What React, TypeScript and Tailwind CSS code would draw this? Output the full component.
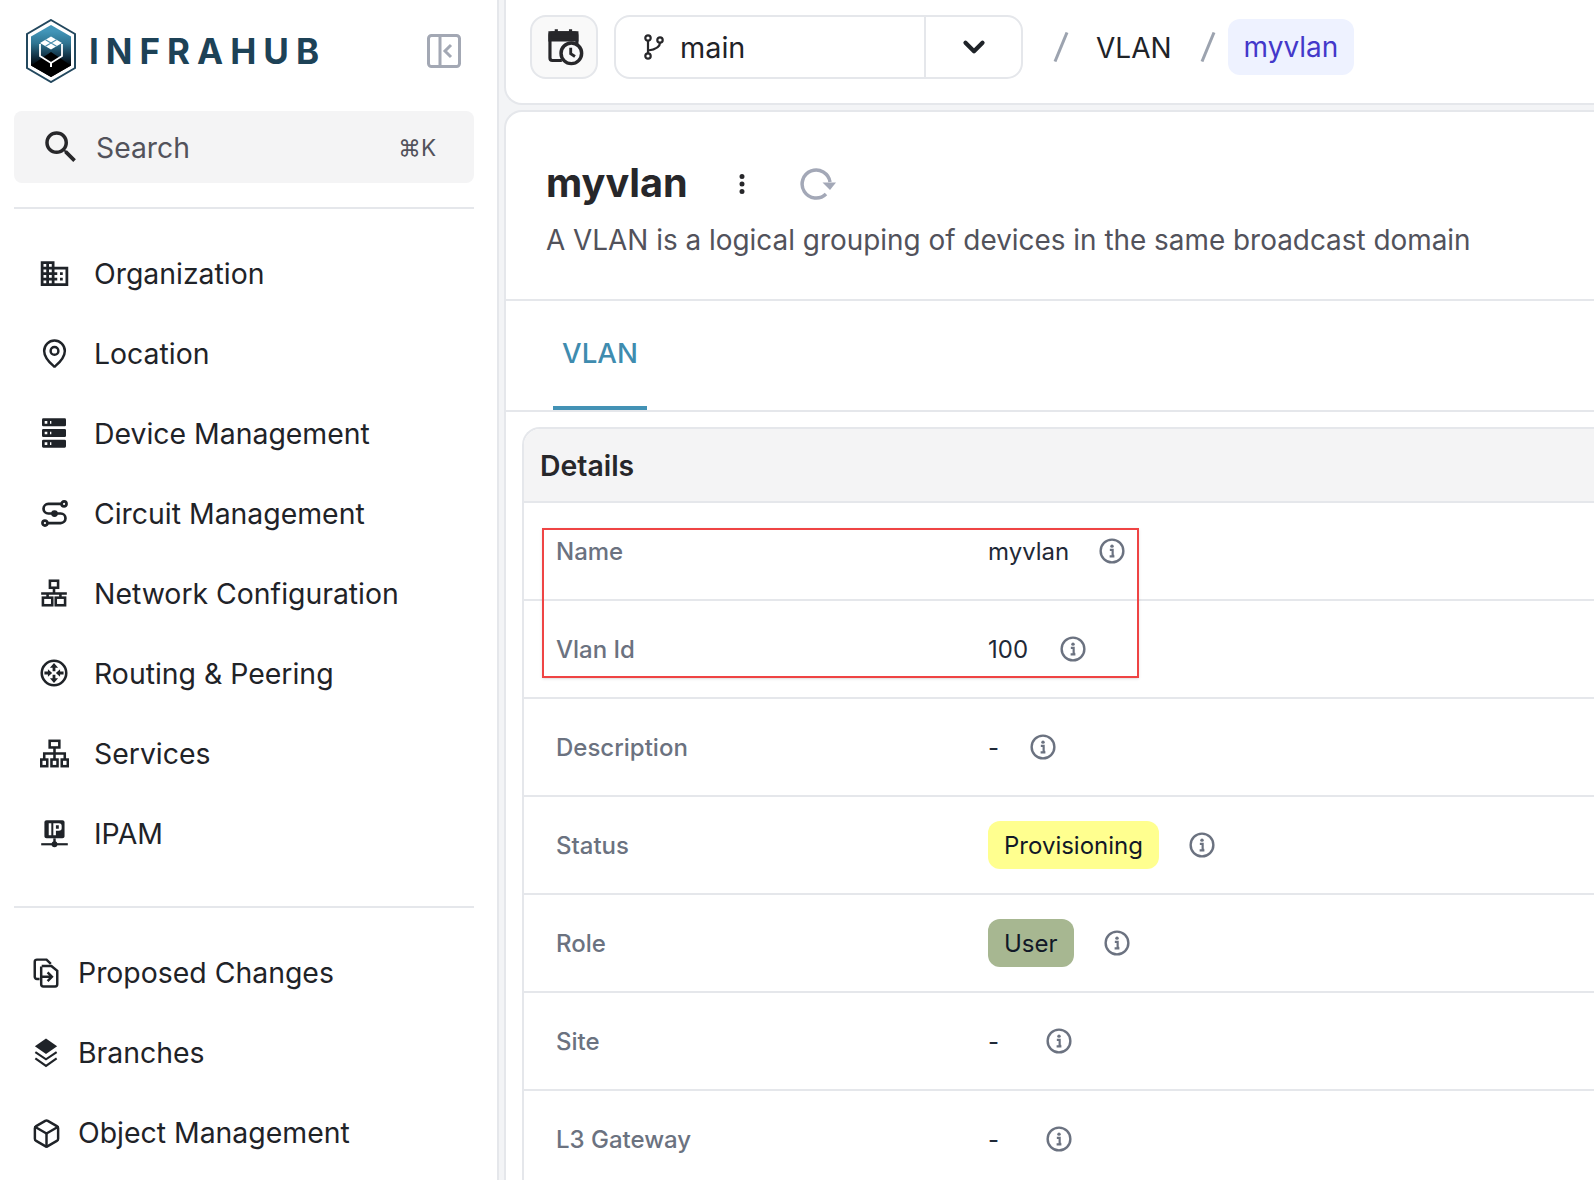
import type { ReactNode } from "react";
import { Box, ChevronDown, MapPin } from "lucide-react";

const font = "font-['Inter','Liberation_Sans',sans-serif]";

function MdiIcon({ d, className }: { d: string; className?: string }) {
  return (
    <svg viewBox="0 0 24 24" fill="currentColor" className={className}>
      <path d={d} />
    </svg>
  );
}

function Logo() {
  return (
    <svg viewBox="0 0 50 64" className="h-[64px] w-[50px] shrink-0">
      <defs>
        <linearGradient id="hexFill" x1="0" y1="0" x2="0" y2="1">
          <stop offset="0.12" stopColor="#4295b8" />
          <stop offset="0.35" stopColor="#2f7592" />
          <stop offset="0.62" stopColor="#0f2c3e" />
          <stop offset="0.8" stopColor="#000000" />
        </linearGradient>
      </defs>
      <path d="M25 1 L49 15 V49 L25 63 L1 49 V15 Z" fill="#fff" stroke="#23485e" strokeWidth="2" />
      <path d="M25 6 L45 17.5 V46.5 L25 58 L5 46.5 V17.5 Z" fill="url(#hexFill)" />
      <path d="M5 46.5 L25 33 L45 46.5 L25 58 Z" fill="#000" />
      <path d="M14 25 V37 L25 44 L36 37 V25" fill="none" stroke="#fff" strokeWidth="1.8" />
      <path d="M25 44 V48" stroke="#fff" strokeWidth="2" />
      <path d="M25 17.5 L36 24 L25 30.5 L14 24 Z" fill="#fff" />
      <path d="M19.5 20.8 L30.5 27.3 M30.5 20.8 L19.5 27.3" stroke="#4a8fae" strokeWidth="1.1" />
    </svg>
  );
}

function CircuitIcon({ className }: { className?: string }) {
  return (
    <svg viewBox="0 0 24 24" fill="none" stroke="currentColor" strokeWidth="2.4" className={className}>
      <circle cx="20.5" cy="3.5" r="2.2" />
      <circle cx="3.5" cy="20.5" r="2.2" />
      <path d="M18.3 3.5H6.5a4.25 4.25 0 0 0 0 8.5h11a4.25 4.25 0 0 1 0 8.5H5.7" />
      <circle cx="12" cy="12" r="3" fill="currentColor" stroke="none" />
    </svg>
  );
}

function NetworkIcon({ className }: { className?: string }) {
  return (
    <svg viewBox="0 0 24 24" fill="none" stroke="currentColor" strokeWidth="2.2" className={className}>
      <rect x="8.5" y="1.5" width="7" height="6" />
      <path d="M12 7.5V12.5M1 12.5H23M6.5 12.5V16M17.500 12.500V16" />
      <rect x="2.500" y="16" width="8" height="6.500" />
      <rect x="13.500" y="16" width="8" height="6.500" />
    </svg>
  );
}

function RoutingIcon({ className }: { className?: string }) {
  return (
    <svg viewBox="0 0 24 24" fill="none" stroke="currentColor" className={className}>
      <circle cx="12" cy="12" r="10.500" strokeWidth="2.200" />
      <path d="M12 3.500L15.500 7.600H13.200V10.500H10.800V7.600H8.500Z" fill="currentColor" stroke="none" />
      <path d="M12 20.500L15.500 16.400H13.200V13.500H10.800V16.400H8.500Z" fill="currentColor" stroke="none" />
      <path d="M10.400 12L6.800 8.700V10.800H3.800V13.200H6.800V15.300Z" fill="currentColor" stroke="none" />
      <path d="M13.600 12L17.200 8.700V10.800H20.200V13.200H17.200V15.300Z" fill="currentColor" stroke="none" />
    </svg>
  );
}

function SitemapIcon({ className }: { className?: string }) {
  return (
    <svg viewBox="0 0 24 24" fill="none" stroke="currentColor" strokeWidth="2.100" className={className}>
      <rect x="8" y="1.500" width="8" height="5.500" />
      <path d="M12 7V12M3.500 17V12H20.500V17M12 12V17" />
      <rect x="1" y="17" width="5" height="5.500" />
      <rect x="9.500" y="17" width="5" height="5.500" />
      <rect x="18" y="17" width="5" height="5.500" />
    </svg>
  );
}

function IpamIcon({ className }: { className?: string }) {
  return (
    <svg viewBox="0 0 24 24" className={className}>
      <path
        fill="currentColor"
        fillRule="evenodd"
        transform="translate(-2.300 0) scale(1.190 1)"
        d="M6.500 1H17.500A1.500 1.500 0 0 1 19 2.500V14.500A1.500 1.500 0 0 1 17.500 16H6.500A1.500 1.500 0 0 1 5 14.500V2.500A1.500 1.500 0 0 1 6.500 1ZM8 3.500V13.500H9.800V3.500ZM11.200 3.500V13.500H13V9.800H15A2.200 2.200 0 0 0 17 7.500V5.800A2.200 2.200 0 0 0 15 3.500ZM13 5.200H15V8.100H13Z"
      />
      <rect x="1" y="20" width="22" height="1.800" fill="currentColor" />
      <rect x="11" y="16" width="2" height="4" fill="currentColor" />
      <circle cx="12" cy="20.900" r="2.400" fill="currentColor" />
    </svg>
  );
}

function ChangesIcon({ className }: { className?: string }) {
  return (
    <svg viewBox="0 0 24 28" fill="none" stroke="currentColor" strokeWidth="2.300" className={className}>
      <path d="M6 19.500H3.500A2 2 0 0 1 1.500 17.500V3.500A2 2 0 0 1 3.500 1.500H12.500L16.500 5.500" />
      <path d="M7.500 8V24.500A2 2 0 0 0 9.500 26.500H20.500A2 2 0 0 0 22.500 24.500V12L17 7.500H8" />
      <path d="M7.500 17.500H17M13.500 13.500L17.500 17.500L13.500 21.500" />
    </svg>
  );
}

function LayersIcon({ className }: { className?: string }) {
  return (
    <svg viewBox="0 0 24 32" className={className}>
      <path d="M12 0.500L23.500 8.500L12 16.500L0.500 8.500Z" fill="currentColor" />
      <path d="M1 14.500L12 22L23 14.500M1 21L12 28.800L23 21" fill="none" stroke="currentColor" strokeWidth="2.200" />
    </svg>
  );
}

function CalendarClockIcon({ className }: { className?: string }) {
  return (
    <svg viewBox="0 0 24 24" fill="none" stroke="currentColor" strokeWidth="2" className={className}>
      <path d="M10 20.500H4A1.500 1.500 0 0 1 2.500 19V4.500A1.500 1.500 0 0 1 4 3H18A1.500 1.500 0 0 1 19.500 4.500V11" />
      <path d="M2.500 3H19.500V7.500H2.500Z" fill="currentColor" />
      <path d="M6.500 0.800V3M15.500 0.800V3" strokeWidth="2" />
      <circle cx="16" cy="16" r="6.500" fill="#f9f9f9" strokeWidth="2.200" />
      <path d="M15.600 12.500V16.200L18.300 18" strokeWidth="1.800" />
    </svg>
  );
}

function BranchIcon({ className }: { className?: string }) {
  return (
    <svg viewBox="0 0 22 26" fill="none" stroke="#27272a" strokeWidth="2.200" className={className}>
      <circle cx="5" cy="4" r="2.700" />
      <circle cx="5" cy="22" r="2.700" />
      <circle cx="17" cy="6" r="2.700" />
      <path d="M5 6.700V19.300M17 8.700C17 13 12 15.500 5 16.500" />
    </svg>
  );
}

function InfoIcon() {
  return (
    <svg viewBox="0 0 24 24" fill="none" className="h-[26px] w-[26px] shrink-0 text-[#6b7280]">
      <circle cx="12" cy="12" r="10.500" stroke="currentColor" strokeWidth="2.200" />
      <circle cx="12" cy="7.500" r="1.600" fill="currentColor" />
      <path d="M10 11H12.600V16.500H14M9.800 17H14.200" stroke="currentColor" strokeWidth="2" />
    </svg>
  );
}

function Slash() {
  return (
    <svg viewBox="0 0 16 30" className="h-[30px] w-[16px] shrink-0" stroke="#9ca3af" strokeWidth="3">
      <path d="M14 0.500L2 29.500" />
    </svg>
  );
}

const mainNav: { label: string; icon: ReactNode }[] = [
  {
    label: "Organization",
    icon: (
      <MdiIcon
        className="h-[33px] w-[33px]"
        d="M18,15H16V17H18M18,11H16V13H18M20,19H12V17H14V15H12V13H14V11H12V9H20M10,7H8V5H10M10,11H8V9H10M10,15H8V13H10M10,19H8V17H10M6,7H4V5H6M6,11H4V9H6M6,15H4V13H6M6,19H4V17H6M12,7V3H2V21H22V7H12Z"
      />
    ),
  },
  { label: "Location", icon: <MapPin className="h-[31px] w-[31px]" strokeWidth={1.9} /> },
  {
    label: "Device Management",
    icon: (
      <MdiIcon
        className="h-[32px] w-[32px]"
        d="M4,1H20A1,1 0 0,1 21,2V6A1,1 0 0,1 20,7H4A1,1 0 0,1 3,6V2A1,1 0 0,1 4,1M4,9H20A1,1 0 0,1 21,10V14A1,1 0 0,1 20,15H4A1,1 0 0,1 3,14V10A1,1 0 0,1 4,9M4,17H20A1,1 0 0,1 21,18V22A1,1 0 0,1 20,23H4A1,1 0 0,1 3,22V18A1,1 0 0,1 4,17M9,5H10V3H9V5M9,13H10V11H9V13M9,21H10V19H9V21M5,3V5H7V3H5M5,11V13H7V11H5M5,19V21H7V19H5Z"
      />
    ),
  },
  { label: "Circuit Management", icon: <CircuitIcon className="h-[27px] w-[27px]" /> },
  { label: "Network Configuration", icon: <NetworkIcon className="h-[28px] w-[28px]" /> },
  { label: "Routing & Peering", icon: <RoutingIcon className="h-[28px] w-[28px]" /> },
  { label: "Services", icon: <SitemapIcon className="h-[29px] w-[29px]" /> },
  { label: "IPAM", icon: <IpamIcon className="h-[29px] w-[29px]" /> },
];

const bottomNav: { label: string; icon: ReactNode }[] = [
  { label: "Proposed Changes", icon: <ChangesIcon className="h-[30px] w-[26px]" /> },
  { label: "Branches", icon: <LayersIcon className="h-[31px] w-[24px]" /> },
  { label: "Object Management", icon: <Box className="h-[31px] w-[31px]" strokeWidth={1.9} /> },
];

function NavRow({ label, icon, className, textClass }: { label: string; icon: ReactNode; className: string; textClass: string }) {
  return (
    <div className={`flex h-[80px] items-center text-[28.4px] text-[#1f2328] ${className}`}>
      <span className="flex w-[28px] items-center justify-center [&>svg]:shrink-0">{icon}</span>
      <span className={textClass}>{label}</span>
    </div>
  );
}

function Sidebar() {
  return (
    <aside className="flex h-full w-[499px] shrink-0 flex-col border-r-2 border-[#e5e7eb] bg-white pl-[14px] pr-[23px]">
      <div className="flex h-[111px] shrink-0 items-center justify-between pb-[10px] pl-[12px] pr-[13px]">
        <div className="flex items-center gap-[13px]">
          <Logo />
          <span className="mt-[2px] text-[35px] font-bold leading-none tracking-[0.2em] text-[#1d4257]">INFRAHUB</span>
        </div>
        <svg viewBox="0 0 34 34" fill="none" stroke="#a3a8b4" strokeWidth="3" className="h-[34px] w-[34px]">
          <rect x="1.500" y="1.500" width="31" height="31" rx="3" />
          <path d="M13 2V32M24 11L18 17L24 23" />
        </svg>
      </div>

      <div className="flex h-[72px] shrink-0 items-center rounded-lg bg-[#f4f4f5] pl-[26px] pr-[38px]">
        <MdiIcon
          className="h-[42px] w-[42px] shrink-0 text-[#27272a]"
          d="M9.500,3A6.500,6.500 0 0,1 16,9.500C16,11.110 15.410,12.590 14.440,13.730L14.710,14H15.500L20.500,19L19,20.500L14,15.500V14.710L13.730,14.440C12.590,15.410 11.110,16 9.500,16A6.500,6.500 0 0,1 3,9.500A6.500,6.500 0 0,1 9.500,3M9.500,5C7,5 5,7 5,9.500C5,12 7,14 9.500,14C12,14 14,12 14,9.500C14,7 12,5 9.500,5Z"
        />
        <span className="mt-[2px] ml-[14px] flex-1 text-[28.3px] text-[#52525b]">Search</span>
        <span className="mt-[1px] text-[22.5px] text-[#52525b]">⌘K</span>
      </div>

      <div className="mt-[24px] border-t-2 border-[#e5e7eb]" />

      <nav className="mt-[24px] flex flex-col">
        {mainNav.map((item) => (
          <NavRow key={item.label} label={item.label} icon={item.icon} className="pl-[26px]" textClass="ml-[26px] mt-[2px]" />
        ))}
      </nav>

      <div className="mt-[33px] border-t-2 border-[#e5e7eb]" />

      <nav className="mt-[25px] flex flex-col">
        {bottomNav.map((item) => (
          <NavRow key={item.label} label={item.label} icon={item.icon} className="pl-[18px]" textClass="ml-[18px]" />
        ))}
      </nav>
    </aside>
  );
}

function TopBar() {
  return (
    <header className="flex h-[105px] shrink-0 items-start rounded-bl-[18px] border-b-2 border-l-2 border-[#e5e7eb] bg-white pl-[24px] pt-[15px]">
      <button className="flex h-[64px] w-[68px] items-center justify-center rounded-[16px] border-2 border-[#e5e7eb] bg-[#f9f9f9]">
        <CalendarClockIcon className="ml-[2px] h-[38px] w-[38px] text-[#27272a]" />
      </button>

      <div className="ml-[16px] flex h-[64px] w-[409px] items-center rounded-[16px] border-2 border-[#e5e7eb] bg-white text-[28.8px] text-[#1f2328]">
        <div className="flex h-full flex-1 items-center border-r-2 border-[#e5e7eb] pl-[27px]">
          <BranchIcon className="h-[26px] w-[22px] shrink-0" />
          <span className="ml-[15px] mt-[1px]">main</span>
        </div>
        <div className="flex w-[95px] items-center justify-center">
          <ChevronDown className="h-[34px] w-[34px]" strokeWidth={3} />
        </div>
      </div>

      <div className="flex h-[64px] items-center text-[28px]">
        <span className="ml-[30px]">
          <Slash />
        </span>
        <span className="ml-[27px] mt-[1px] text-[#1f2328]">VLAN</span>
        <span className="ml-[28px]">
          <Slash />
        </span>
        <span className="ml-[12px] flex h-[56px] items-center rounded-[12px] bg-[#eef2ff] px-[16px] text-[#4338ca]">
          myvlan
        </span>
      </div>
    </header>
  );
}

type Row = {
  label: string;
  value: string;
  badge?: string;
  iconGap: string;
};

const rows: Row[] = [
  { label: "Name", value: "myvlan", iconGap: "ml-[30px]" },
  { label: "Vlan Id", value: "100", iconGap: "ml-[32px]" },
  { label: "Description", value: "-", iconGap: "ml-[31px]" },
  { label: "Status", badge: "bg-[#ffff8f]", value: "Provisioning", iconGap: "ml-[30px]" },
  { label: "Role", badge: "bg-[#a7b791]", value: "User", iconGap: "ml-[30px]" },
  { label: "Site", value: "-", iconGap: "ml-[47px]" },
  { label: "L3 Gateway", value: "-", iconGap: "ml-[47px]" },
];

function DetailRow({ row }: { row: Row }) {
  return (
    <div className="flex h-[98px] shrink-0 items-center border-b-2 border-[#e5e7eb] pl-[32px] text-[24px]">
      <span className="mt-[2px] w-[432px] font-medium text-[#6b7280]">{row.label}</span>
      {row.badge ? (
        <span className={`flex h-[48px] items-center rounded-[12px] px-[16px] pt-[2px] text-[#111827] ${row.badge}`}>
          {row.value}
        </span>
      ) : (
        <span className="mt-[2px] text-[#1f2937]">{row.value}</span>
      )}
      <span className={row.iconGap}>
        <InfoIcon />
      </span>
    </div>
  );
}

function ObjectCard() {
  return (
    <section className="min-h-0 flex-1 overflow-hidden rounded-tl-[18px] border-l-2 border-t-2 border-[#e5e7eb] bg-white">
      <div className="h-[189px] border-b-2 border-[#e5e7eb] pl-[40px] pt-[47px]">
        <div className="flex h-[50px] items-center">
          <h1 className="text-[39.700px] font-bold leading-none text-[#27272a]">myvlan</h1>
          <MdiIcon
            className="ml-[39px] h-[30px] w-[30px] text-[#27272a]"
            d="M12,16A2,2 0 0,1 14,18A2,2 0 0,1 12,20A2,2 0 0,1 10,18A2,2 0 0,1 12,16M12,10A2,2 0 0,1 14,12A2,2 0 0,1 12,14A2,2 0 0,1 10,12A2,2 0 0,1 12,10M12,4A2,2 0 0,1 14,6A2,2 0 0,1 12,8A2,2 0 0,1 10,6A2,2 0 0,1 12,4Z"
          />
          <svg viewBox="0 0 36 36" className="ml-[43px] h-[36px] w-[36px]">
            <path d="M30 16A14 14 0 1 0 26 28" fill="none" stroke="#a3a8b7" strokeWidth="3.500" />
            <path d="M22.500 16.500H36L30 24Z" fill="#a3a8b7" />
          </svg>
        </div>
        <p className="mt-[11px] text-[27.9px] text-[#52525b]">
          A VLAN is a logical grouping of devices in the same broadcast domain
        </p>
      </div>

      <div className="flex h-[111px] border-b-2 border-[#e5e7eb] pl-[47px]">
        <div className="flex h-[109px] items-center border-b-4 border-[#4392b5] px-[9px] text-[27.700px] font-medium text-[#3f8caf]">
          VLAN
        </div>
      </div>

      <div className="relative ml-[16px] mt-[15px] flex h-[760px] flex-col overflow-hidden rounded-tl-[18px] border-l-2 border-t-2 border-[#e5e7eb]">
        <div className="flex h-[74px] shrink-0 items-center border-b-2 border-[#e5e7eb] bg-[#f4f4f5] pl-[16px] pt-[2px] text-[28.400px] font-semibold text-[#27272a]">
          Details
        </div>
        {rows.map((row) => (
          <DetailRow key={row.label} row={row} />
        ))}
        {/* highlight from the original screenshot, sits over the first two rows */}
        <div className="absolute left-[18px] top-[99px] h-[150px] w-[597px] border-2 border-[#ef4444] shadow-sm" />
      </div>
    </section>
  );
}

export default function App() {
  return (
    <div className={`flex h-[1180px] w-full overflow-hidden bg-[#f3f4f6] ${font}`}>
      <Sidebar />
      <main className="flex h-full min-w-0 flex-1 flex-col gap-[5px] pl-[5px]">
        <TopBar />
        <ObjectCard />
      </main>
    </div>
  );
}
